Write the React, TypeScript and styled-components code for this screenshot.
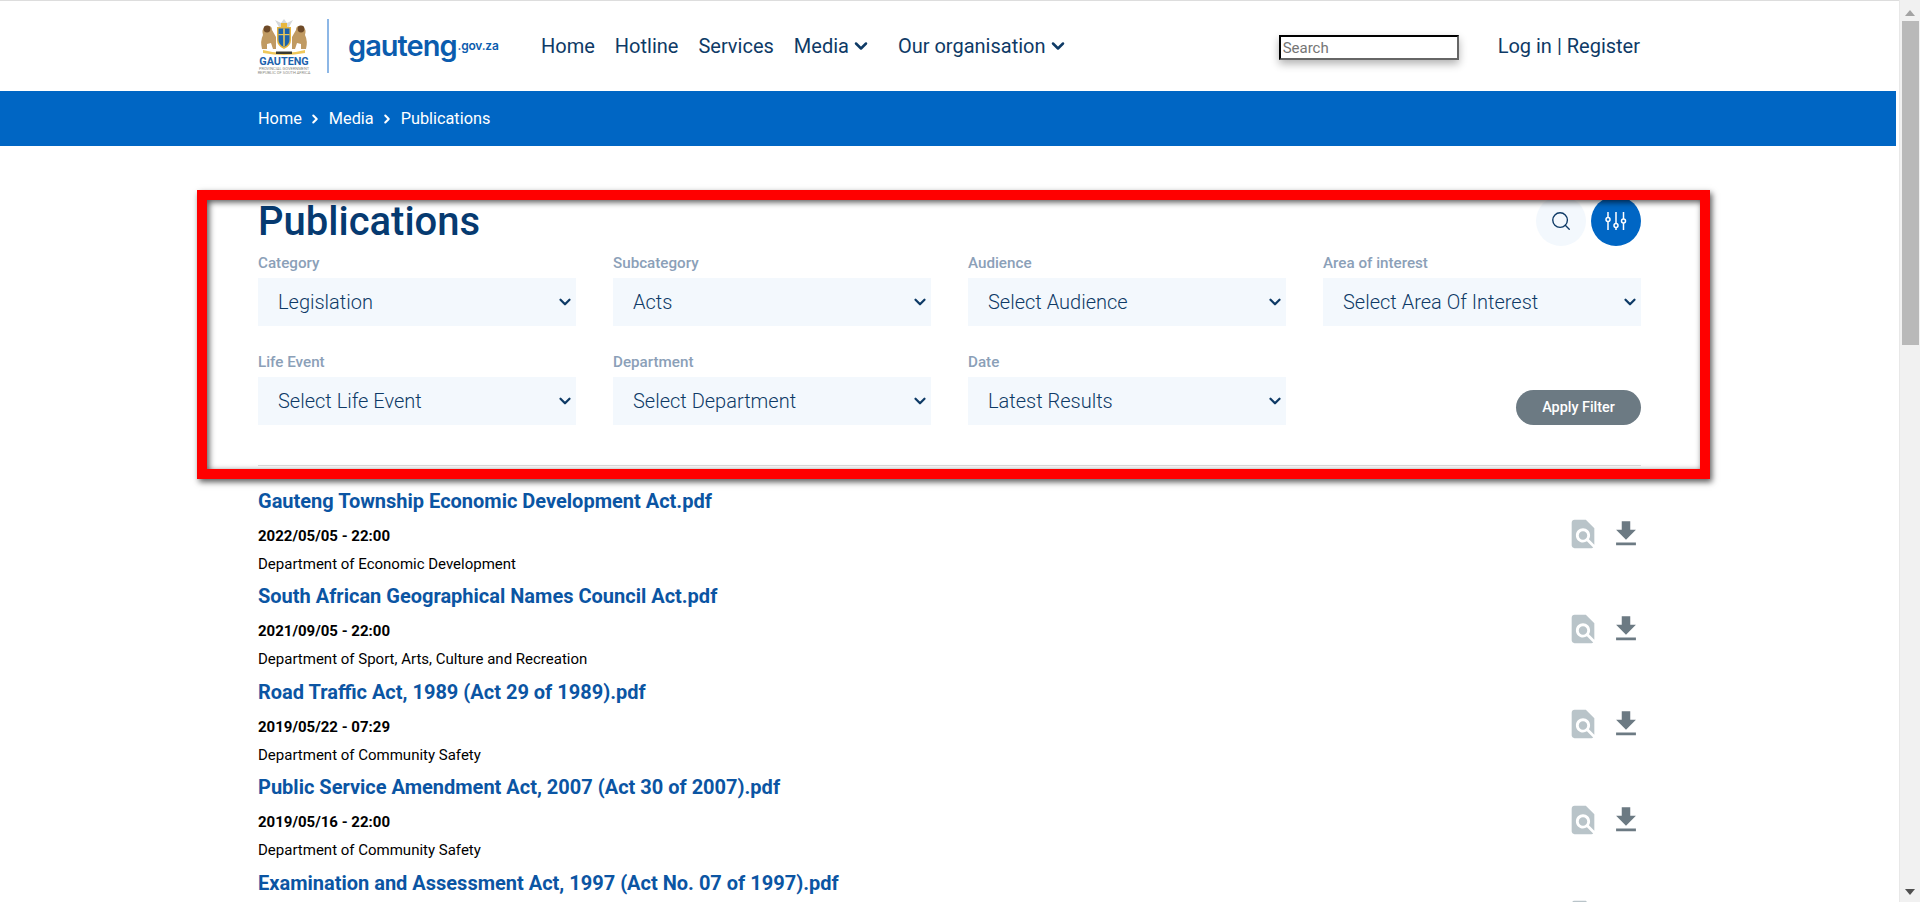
import styled, { createGlobalStyle } from 'styled-components';
import { ChevronDown, ChevronRight, Search } from 'lucide-react';
import { MdFileDownload, MdFindInPage } from 'react-icons/md';

const GlobalStyle = createGlobalStyle`
  html, body {
    margin: 0;
    height: 100%;
    overflow: hidden;
    background: #fff;
    font-family: Roboto, "Liberation Sans", sans-serif;
  }
`;

const Shell = styled.div`
  display: flex;
  position: relative;
  height: 902px;
  overflow: hidden;
`;

const Page = styled.div`
  flex: 1;
  min-width: 0;
`;

const Container = styled.div`
  width: 1383px;
  margin: 0 auto;
`;

const Header = styled.header`
  height: 90px;
  border-top: 1px solid #ddd;
`;

const HeaderRow = styled(Container)`
  display: flex;
  align-items: center;
  height: 100%;
`;

const LogoLink = styled.a`
  display: flex;
  align-items: center;
  width: 283px;
  flex: none;
`;

const Crest = styled.div`
  display: flex;
  flex-direction: column;
  align-items: center;
  width: 52px;
  margin-top: 1px;
`;

const CrestName = styled.span`
  font-size: 10.8px;
  line-height: 10px;
  font-weight: 700;
  color: #1c63ad;
`;

const CrestSmall = styled.span`
  font-size: 4px;
  line-height: 4px;
  color: #8a8a80;
  white-space: nowrap;
`;

const LogoDivider = styled.span`
  width: 2px;
  height: 54px;
  margin: 0 19px 0 17px;
  background: #8db7e6;
`;

const Wordmark = styled.span`
  font-family: Inter, sans-serif;
  font-size: 29px;
  font-weight: 600;
  letter-spacing: -1px;
  color: #0b5cae;
  position: relative;
  top: -1px;
`;

const WordmarkDomain = styled.span`
  font-family: Inter, sans-serif;
  font-size: 12px;
  font-weight: 600;
  letter-spacing: -0.2px;
  color: #0b5cae;
  margin: -2px 0 0 1px;
`;

const Nav = styled.nav`
  display: flex;
  align-items: center;
  font-size: 20px;
  color: #0e3a66;
`;

const NavItem = styled.a<{ $gap: number }>`
  display: flex;
  align-items: center;
  gap: 2px;
  margin-right: ${(p) => p.$gap}px;
`;

const SearchInput = styled.input`
  width: 180px;
  height: 25px;
  box-sizing: border-box;
  margin: 3px 0 0 auto;
  padding: 1px 2px;
  font-family: Roboto, sans-serif;
  font-size: 15px;
  border: 2px inset #767676;
  border-color: #1f1f1f #666 #666 #1f1f1f;
  box-shadow: 0 4px 8px rgba(0, 0, 0, 0.3);
  &::placeholder {
    color: #757575;
  }
`;

const Account = styled.a`
  margin: 0 1px 0 39px;
  font-size: 20px;
  color: #0e3a66;
`;

const Band = styled.div`
  height: 55px;
  margin-right: 3px;
  background: #0066c4;
  color: #fff;
`;

const Crumbs = styled(Container)`
  display: flex;
  align-items: center;
  gap: 6.5px;
  height: 100%;
  font-size: 16.3px;
  position: relative;
  left: 1.5px;
`;

const Main = styled(Container)`
  padding-top: 50px;
`;

const TitleRow = styled.div`
  display: flex;
  align-items: center;
  height: 50px;
`;

const Title = styled.h1`
  margin: 2px 0 0;
  font-size: 40px;
  font-weight: 500;
  line-height: 50px;
  color: #063a70;
`;

const RoundButton = styled.button<{ $active?: boolean }>`
  display: flex;
  align-items: center;
  justify-content: center;
  width: 50px;
  height: 50px;
  padding: 0;
  margin-left: 5px;
  border: 0;
  border-radius: 50%;
  background: ${(p) => (p.$active ? '#0066c4' : '#f3f8fd')};
  color: ${(p) => (p.$active ? '#fff' : '#0e3a66')};
`;

const TitleActions = styled.div`
  display: flex;
  margin-left: auto;
`;

const FilterGrid = styled.div`
  display: grid;
  grid-template-columns: repeat(4, 1fr);
  column-gap: 37px;
  row-gap: 19px;
  padding-bottom: 40px;
  border-bottom: 1px solid #ddd;
`;

const Field = styled.label`
  display: flex;
  flex-direction: column;
`;

const FieldLabel = styled.span`
  height: 32px;
  padding-top: 9px;
  box-sizing: border-box;
  font-size: 15.2px;
  line-height: 16px;
  font-weight: 500;
  color: #8ba0b8;
`;

const SelectWrap = styled.div`
  position: relative;
  color: #0e3a66;
  svg {
    position: absolute;
    top: 15px;
    right: 2px;
    pointer-events: none;
  }
`;

const Select = styled.select`
  display: block;
  width: 100%;
  height: 48px;
  padding: 0 20px 1px;
  border: 0;
  border-radius: 0;
  appearance: none;
  background-color: #f3f8fd;
  font-family: Roboto, sans-serif;
  font-size: 20px;
  font-weight: 300;
  color: #0e3a66;
`;

const ApplyCell = styled.div`
  display: flex;
  align-items: flex-end;
  justify-content: flex-end;
`;

const ApplyButton = styled.button`
  width: 125px;
  height: 35px;
  padding: 0 0 1px;
  border: 0;
  border-radius: 18px;
  background: #6c7a83;
  color: #fff;
  font-family: Roboto, sans-serif;
  font-size: 14.4px;
  font-weight: 500;
`;

const List = styled.div`
  padding-top: 20px;
`;

const Item = styled.article`
  display: flex;
  align-items: center;
  height: 95.4px;
`;

const ItemBody = styled.div`
  flex: 1;
  min-width: 0;
  align-self: flex-start;
`;

const ItemTitle = styled.a`
  display: block;
  font-size: 20px;
  line-height: 30px;
  font-weight: 700;
  color: #0b55a3;
`;

const ItemDate = styled.div`
  margin-top: 8px;
  font-size: 15px;
  line-height: 24px;
  font-weight: 700;
  color: #000;
`;

const ItemDepartment = styled.div`
  margin-top: 4px;
  font-size: 15px;
  line-height: 24px;
  color: #000;
`;

const ItemActions = styled.div`
  display: flex;
  gap: 9px;
  margin-right: -2px;
`;

const ScrollTrack = styled.div`
  display: flex;
  flex-direction: column;
  align-items: center;
  width: 21px;
  flex: none;
  box-sizing: border-box;
  border-left: 1px solid #e8e8e8;
  background: #f1f1f1;
`;

const ScrollArrow = styled.span<{ $down?: boolean }>`
  width: 0;
  height: 0;
  margin: ${(p) => (p.$down ? 'auto 0 7px' : '10px 0 5px')};
  border-left: 5px solid transparent;
  border-right: 5px solid transparent;
  ${(p) =>
    p.$down ? 'border-top: 6px solid #505050;' : 'border-bottom: 6px solid #a3a3a3;'}
`;

const ScrollThumb = styled.span`
  width: 17px;
  height: 324px;
  background: #b9b9b9;
`;

const Highlight = styled.div`
  position: absolute;
  top: 190px;
  left: 197px;
  width: 1513px;
  height: 289px;
  box-sizing: border-box;
  border: 10px solid #f00;
  pointer-events: none;
  box-shadow: 2px 3px 6px rgba(0, 0, 0, 0.65), inset 2px 2px 6px rgba(0, 0, 0, 0.7);
`;

const filters = [
  ['Category', 'Legislation'],
  ['Subcategory', 'Acts'],
  ['Audience', 'Select Audience'],
  ['Area of interest', 'Select Area Of Interest'],
  ['Life Event', 'Select Life Event'],
  ['Department', 'Select Department'],
  ['Date', 'Latest Results'],
];

// the last row runs off the bottom of the window, only its title is visible
const publications = [
  { title: 'Gauteng Township Economic Development Act.pdf', date: '2022/05/05 - 22:00', department: 'Department of Economic Development' },
  { title: 'South African Geographical Names Council Act.pdf', date: '2021/09/05 - 22:00', department: 'Department of Sport, Arts, Culture and Recreation' },
  { title: 'Road Traffic Act, 1989 (Act 29 of 1989).pdf', date: '2019/05/22 - 07:29', department: 'Department of Community Safety' },
  { title: 'Public Service Amendment Act, 2007 (Act 30 of 2007).pdf', date: '2019/05/16 - 22:00', department: 'Department of Community Safety' },
  { title: 'Examination and Assessment Act, 1997 (Act No. 07 of 1997).pdf' },
];

function CoatOfArms() {
  return (
    <svg width="48" height="38" viewBox="0 0 48 38">
      <path d="M19 8 L15 1 L21 4 L24 0 L27 4 L33 1 L29 8 Z" fill="#d5d8da" />
      <rect x="21" y="4" width="6" height="4" fill="#e9b73c" />
      <path d="M17 8 H31 V21 Q31 27 24 30 Q17 27 17 21 Z" fill="#e6b640" />
      <path d="M18.5 9.5 H29.5 V21 Q29.5 25.5 24 28 Q18.5 25.5 18.5 21 Z" fill="#1c63ad" />
      <rect x="23.2" y="9.5" width="1.6" height="18" fill="#e9c65a" />
      <rect x="18.5" y="15" width="11" height="1.2" fill="#e9c65a" />
      <path d="M2 30 Q0 22 3 16 Q1 10 6 7 Q12 6 12 11 L16 18 L16 30 L13 30 L11 24 L7 25 L7 30 Z" fill="#c09a62" />
      <path d="M46 30 Q48 22 45 16 Q47 10 42 7 Q36 6 36 11 L32 18 L32 30 L35 30 L37 24 L41 25 L41 30 Z" fill="#c09a62" />
      <circle cx="7" cy="10" r="3.4" fill="#6e4a28" />
      <circle cx="41" cy="10" r="3.4" fill="#6e4a28" />
      <path d="M3 31 Q24 37 45 31 L45 34 Q24 38 3 34 Z" fill="#efc75a" />
      <rect x="16" y="32.5" width="16" height="2.5" fill="#3a3a30" />
    </svg>
  );
}

function SlidersIcon() {
  return (
    <svg width="24" height="24" viewBox="0 0 24 24" fill="none" stroke="currentColor" strokeWidth="1.5">
      <path d="M4 3v5.5M4 12.5V21M12 3v11.5M12 18.5V21M19.5 3v7M19.5 14v7" />
      <circle cx="4" cy="10.5" r="2" />
      <circle cx="12" cy="16.5" r="2" />
      <circle cx="19.5" cy="12" r="2" />
    </svg>
  );
}

function App() {
  return (
    <Shell>
      <GlobalStyle />
      <Page>
        <Header>
          <HeaderRow>
            <LogoLink>
              <Crest>
                <CoatOfArms />
                <CrestName>GAUTENG</CrestName>
                <CrestSmall>PROVINCIAL GOVERNMENT</CrestSmall>
                <CrestSmall>REPUBLIC OF SOUTH AFRICA</CrestSmall>
              </Crest>
              <LogoDivider />
              <Wordmark>gauteng</Wordmark>
              <WordmarkDomain>.gov.za</WordmarkDomain>
            </LogoLink>
            <Nav>
              <NavItem $gap={20}>Home</NavItem>
              <NavItem $gap={20}>Hotline</NavItem>
              <NavItem $gap={20}>Services</NavItem>
              <NavItem $gap={27}>
                Media <ChevronDown size={20} strokeWidth={3} />
              </NavItem>
              <NavItem $gap={0}>
                Our organisation <ChevronDown size={20} strokeWidth={3} />
              </NavItem>
            </Nav>
            <SearchInput placeholder="Search" />
            <Account>Log in | Register</Account>
          </HeaderRow>
        </Header>
        <Band>
          <Crumbs>
            <span>Home</span>
            <ChevronRight size={14} strokeWidth={3.5} />
            <span>Media</span>
            <ChevronRight size={14} strokeWidth={3.5} />
            <span>Publications</span>
          </Crumbs>
        </Band>
        <Main>
          <TitleRow>
            <Title>Publications</Title>
            <TitleActions>
              <RoundButton>
                <Search size={22} strokeWidth={1.5} />
              </RoundButton>
              <RoundButton $active>
                <SlidersIcon />
              </RoundButton>
            </TitleActions>
          </TitleRow>
          <FilterGrid>
            {filters.map(([label, value]) => (
              <Field key={label}>
                <FieldLabel>{label}</FieldLabel>
                <SelectWrap>
                  <Select defaultValue={value}>
                    <option>{value}</option>
                  </Select>
                  <ChevronDown size={18} strokeWidth={3} />
                </SelectWrap>
              </Field>
            ))}
            <ApplyCell>
              <ApplyButton>Apply Filter</ApplyButton>
            </ApplyCell>
          </FilterGrid>
          <List>
            {publications.map((item) => (
              <Item key={item.title}>
                <ItemBody>
                  <ItemTitle>{item.title}</ItemTitle>
                  {item.date && <ItemDate>{item.date}</ItemDate>}
                  {item.department && <ItemDepartment>{item.department}</ItemDepartment>}
                </ItemBody>
                <ItemActions>
                  <MdFindInPage size={34} color="#b9c4c9" />
                  <MdFileDownload size={34} color="#6c7a83" />
                </ItemActions>
              </Item>
            ))}
          </List>
        </Main>
      </Page>
      <ScrollTrack>
        <ScrollArrow />
        <ScrollThumb />
        <ScrollArrow $down />
      </ScrollTrack>
      <Highlight />
    </Shell>
  );
}

export default App;
